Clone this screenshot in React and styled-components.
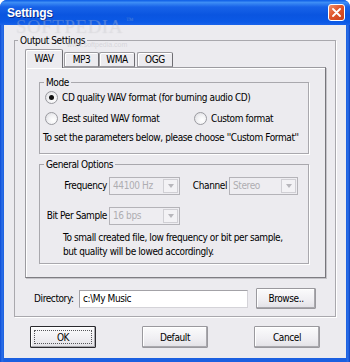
import React from "react";
import styled, { createGlobalStyle } from "styled-components";

const GlobalStyle = createGlobalStyle`
  html, body {
    margin: 0;
    padding: 0;
    background: #ffffff;
  }
  body {
    font-family: "DejaVu Sans Condensed", "DejaVu Sans", "Liberation Sans", Arial, sans-serif;
    font-size: 10px;
    letter-spacing: -0.4px;
    color: #000000;
  }
`;

const Window = styled.div`
  position: relative;
  width: 350px;
  height: 362px;
  display: flex;
  flex-direction: column;
  overflow: hidden;
  border-radius: 7px 7px 0 0;
  background: #0a4ad8;
`;

const TitleBar = styled.div`
  height: 25px;
  flex: none;
  display: flex;
  align-items: center;
  justify-content: space-between;
  padding: 0 5px 0 7px;
  background: linear-gradient(
    180deg,
    #0b5ce6 0%,
    #3d8df5 10%,
    #1762e8 28%,
    #0a55e0 60%,
    #0b59e6 88%,
    #1a63ea 100%
  );
`;

const Title = styled.span`
  color: #ffffff;
  font-family: "Liberation Sans", Arial, sans-serif;
  font-weight: bold;
  font-size: 12px;
  letter-spacing: -0.2px;
  text-shadow: 1px 1px 0 #0a2a8a;
`;

const CloseButton = styled.div`
  width: 17px;
  height: 17px;
  box-sizing: border-box;
  border: 1px solid #ffffff;
  border-radius: 3px;
  background: linear-gradient(135deg, #f0906a 0%, #e0562c 45%, #c8401c 100%);
  display: flex;
  align-items: center;
  justify-content: center;
`;

const Frame = styled.div`
  flex: 1;
  min-height: 0;
  display: flex;
  padding: 0 4px 4px;
  background: linear-gradient(90deg, #0b4bd6 0px, #2b6fe8 2px, #1b5fe0 4px, #1b5fe0 346px, #2b6fe8 348px, #0a3fc0 350px);
`;

const Client = styled.div`
  flex: 1;
  min-width: 0;
  display: flex;
  flex-direction: column;
  padding: 9px 10px 0;
  background: #ecebef;
`;

const GroupBox = styled.fieldset`
  margin: ${(p) => p.$mt || 0}px 0 0;
  padding: 0;
  min-width: 0;
  border: 1px solid #a9a8ad;
  box-shadow: 1px 1px 0 #ffffff;
`;

const Legend = styled.legend`
  margin-left: ${(p) => p.$ml || 4}px;
  padding: 0 2px;
  line-height: 13px;
  color: #000000;
`;

const OutputBody = styled.div`
  padding: 2px 9px 7px 10px;
`;

const TabStrip = styled.div`
  display: flex;
  align-items: flex-end;
  height: 18px;
  position: relative;
  z-index: 1;
`;

const Tab = styled.div`
  box-sizing: border-box;
  width: ${(p) => p.$w}px;
  height: ${(p) => (p.$active ? 19 : 15)}px;
  margin-left: ${(p) => p.$ml || 0}px;
  margin-bottom: ${(p) => (p.$active ? -1 : 0)}px;
  display: flex;
  align-items: center;
  justify-content: center;
  padding-bottom: ${(p) => (p.$active ? 2 : 0)}px;
  border: 1px solid #9c9ba0;
  border-bottom: ${(p) => (p.$active ? "none" : "1px solid #9c9ba0")};
  border-right-color: #6e6d72;
  border-radius: 2px 2px 0 0;
  background: #ecebef;
  box-shadow: inset 1px 1px 0 #ffffff;
`;

const TabPanel = styled.div`
  border: 1px solid #9c9ba0;
  border-right-color: #76757a;
  border-bottom-color: #7e7d82;
  box-shadow: inset 1px 1px 0 #ffffff, 1px 1px 0 #c4c3c8;
  padding: 8px 16px 13px 13px;
  background: #ecebef;
  overflow: hidden;
`;

const ModeBody = styled.div`
  padding: 0 4px 8px 3px;
  display: flex;
  flex-direction: column;
`;

const RadioRow = styled.div`
  display: flex;
  align-items: center;
  height: 16px;
  margin-top: ${(p) => p.$mt || 0}px;
`;

const RadioOption = styled.label`
  display: flex;
  align-items: center;
  gap: 4px;
  margin-left: 2px;
  width: ${(p) => (p.$w ? `${p.$w}px` : "auto")};
`;

const RadioCircle = styled.span`
  width: 13px;
  height: 13px;
  box-sizing: border-box;
  border-radius: 50%;
  border: 1px solid #9a9aa0;
  background: radial-gradient(circle at 65% 65%, #ffffff 0%, #f2f2f4 45%, #d8d8dc 100%);
  display: flex;
  align-items: center;
  justify-content: center;
  flex: none;

  &::after {
    content: "";
    width: 5px;
    height: 5px;
    border-radius: 50%;
    background: ${(p) => (p.$checked ? "#111111" : "transparent")};
  }
`;

const Hint = styled.div`
  line-height: 14px;
  white-space: nowrap;
  margin-top: ${(p) => p.$mt || 0}px;
  margin-left: ${(p) => p.$ml || 0}px;
`;

const GeneralBody = styled.div`
  padding: 6px 4px 4px 6px;
  display: flex;
  flex-direction: column;
`;

const FieldRow = styled.div`
  display: flex;
  align-items: center;
  height: 17px;
  margin-top: ${(p) => p.$mt || 0}px;
`;

const FieldLabel = styled.span`
  box-sizing: border-box;
  width: ${(p) => p.$w}px;
  text-align: right;
  padding-right: 2px;
  white-space: nowrap;
`;

const Combo = styled.div`
  box-sizing: border-box;
  width: ${(p) => p.$w}px;
  height: 18px;
  display: flex;
  align-items: stretch;
  border: 1px solid #b4b3b8;
  background: #eeedf1;
`;

const ComboText = styled.span`
  flex: 1;
  display: flex;
  align-items: center;
  padding-left: 3px;
  color: #aeadb2;
`;

const ComboArrow = styled.span`
  width: 15px;
  margin: 1px;
  box-sizing: border-box;
  border: 1px solid #d0cfd4;
  background: #f3f2f5;
  display: flex;
  align-items: center;
  justify-content: center;

  &::after {
    content: "";
    border-left: 3.5px solid transparent;
    border-right: 3.5px solid transparent;
    border-top: 4px solid #b8b7bc;
  }
`;

const DirRow = styled.div`
  display: flex;
  align-items: center;
  height: 21px;
  margin-top: 10px;
  padding-left: 9px;
`;

const DirLabel = styled.span`
  width: 45px;
  white-space: nowrap;
`;

const TextInput = styled.div`
  box-sizing: border-box;
  width: 169px;
  height: 18px;
  border: 1px solid #a3a2a7;
  border-right-color: #d4d3d8;
  border-bottom-color: #d4d3d8;
  background: #ffffff;
  display: flex;
  align-items: center;
  padding-left: 3px;
`;

const Button = styled.div`
  box-sizing: border-box;
  width: ${(p) => p.$w}px;
  height: ${(p) => p.$h || 22}px;
  margin-left: ${(p) => p.$ml || 0}px;
  display: flex;
  align-items: center;
  justify-content: center;
  border: 1px solid ${(p) => (p.$default ? "#2a2a2e" : "#9a999e")};
  border-radius: 1px;
  background: linear-gradient(180deg, #fbfbfc 0%, #efeef2 60%, #e2e1e6 100%);
  box-shadow: inset -1px -1px 0 #a9a8ad, inset 1px 1px 0 #ffffff;
  position: relative;

  &::before {
    content: "";
    display: ${(p) => (p.$default ? "block" : "none")};
    position: absolute;
    inset: 3px;
    border: 1px dotted #555559;
  }
`;

const ButtonRow = styled.div`
  display: flex;
  justify-content: space-between;
  margin-top: 9px;
  padding: 0 16px;
`;

const Watermark = styled.div`
  position: absolute;
  left: 16px;
  top: 16px;
  font-family: "Liberation Serif", "Times New Roman", serif;
  font-size: 19px;
  letter-spacing: 0.5px;
  color: rgba(255, 255, 255, 0.16);
  text-shadow: 0 0 1px rgba(150, 150, 160, 0.25);
  pointer-events: none;
  white-space: nowrap;
`;

const WatermarkTm = styled.span`
  font-size: 8px;
  vertical-align: top;
  margin-left: 3px;
`;

const WatermarkUrl = styled.div`
  position: absolute;
  left: 67px;
  top: 41px;
  font-family: "Liberation Sans", Arial, sans-serif;
  font-size: 7px;
  letter-spacing: 0;
  color: rgba(200, 200, 205, 0.6);
  pointer-events: none;
`;

function Radio({ checked, children, w }) {
  return (
    <RadioOption $w={w}>
      <RadioCircle $checked={checked} />
      <span>{children}</span>
    </RadioOption>
  );
}

function Select({ value, w }) {
  return (
    <Combo $w={w}>
      <ComboText>{value}</ComboText>
      <ComboArrow />
    </Combo>
  );
}

export default function App() {
  return (
    <>
      <GlobalStyle />
      <Window>
        <TitleBar>
          <Title>Settings</Title>
          <CloseButton>
            <svg width="9" height="9" viewBox="0 0 9 9">
              <path d="M1 1 L8 8 M8 1 L1 8" stroke="#ffffff" strokeWidth="1.8" strokeLinecap="round" />
            </svg>
          </CloseButton>
        </TitleBar>
        <Frame>
          <Client>
            <GroupBox>
              <Legend $ml={3}>Output Settings</Legend>
              <OutputBody>
                <TabStrip>
                  <Tab $w={38} $active>WAV</Tab>
                  <Tab $w={35} $ml={1}>MP3</Tab>
                  <Tab $w={36} $ml={0}>WMA</Tab>
                  <Tab $w={36} $ml={2}>OGG</Tab>
                </TabStrip>
                <TabPanel>
                  <GroupBox>
                    <Legend $ml={4}>Mode</Legend>
                    <ModeBody>
                      <RadioRow>
                        <Radio checked>CD quality WAV format (for burning audio CD)</Radio>
                      </RadioRow>
                      <RadioRow $mt={5}>
                        <Radio w={147}>Best suited WAV format</Radio>
                        <Radio>Custom format</Radio>
                      </RadioRow>
                      <Hint $mt={5}>To set the parameters below, please choose ''Custom Format''</Hint>
                    </ModeBody>
                  </GroupBox>
                  <GroupBox $mt={4}>
                    <Legend $ml={4}>General Options</Legend>
                    <GeneralBody>
                      <FieldRow>
                        <FieldLabel $w={63}>Frequency</FieldLabel>
                        <Select value="44100 Hz" w={71} />
                        <FieldLabel $w={49}>Channel</FieldLabel>
                        <Select value="Stereo" w={69} />
                      </FieldRow>
                      <FieldRow $mt={13}>
                        <FieldLabel $w={63}>Bit Per Sample</FieldLabel>
                        <Select value="16 bps" w={71} />
                      </FieldRow>
                      <Hint $mt={7} $ml={17}>
                        To small created file, low frequency or bit per sample,
                        <br />
                        but quality will be lowed accordingly.
                      </Hint>
                    </GeneralBody>
                  </GroupBox>
                </TabPanel>
                <DirRow>
                  <DirLabel>Directory:</DirLabel>
                  <TextInput>c:\My Music</TextInput>
                  <Button $w={60} $h={21} $ml={8}>Browse..</Button>
                </DirRow>
              </OutputBody>
            </GroupBox>
            <ButtonRow>
              <Button $w={66} $default>OK</Button>
              <Button $w={66}>Default</Button>
              <Button $w={66}>Cancel</Button>
            </ButtonRow>
          </Client>
        </Frame>
        <Watermark>
          SOFTPEDIA<WatermarkTm>™</WatermarkTm>
        </Watermark>
        <WatermarkUrl>www.softpedia.com</WatermarkUrl>
      </Window>
    </>
  );
}
